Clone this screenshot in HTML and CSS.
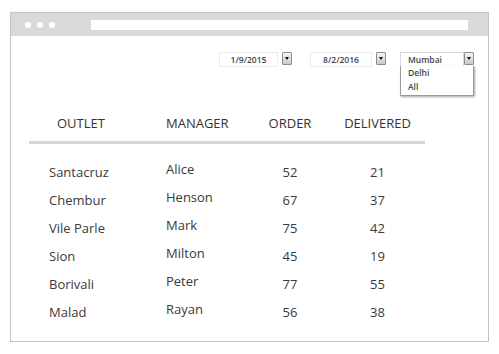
FILE: index.html
```html
<!DOCTYPE html>
<html lang="en">
<head>
    <meta charset="utf-8">
    <link rel="stylesheet" href="styles.css">
</head>
<body>
    <div class="frame">
        <div class="titlebar">
            <span class="dot"></span>
            <span class="dot"></span>
            <span class="dot"></span>
            <span class="address"></span>
        </div>

        <div class="filters">
            <div class="picker first">
                <div class="field">1/9/2015</div>
                <div class="btn"><span class="arrow"></span></div>
            </div>
            <div class="picker second">
                <div class="field">8/2/2016</div>
                <div class="btn"><span class="arrow"></span></div>
            </div>
            <div class="picker city">
                <div class="field left">Mumbai</div>
                <div class="btn"><span class="arrow"></span></div>
                <ul class="options">
                    <li>Delhi</li>
                    <li>All</li>
                </ul>
            </div>
        </div>

        <div class="report">
            <div class="row head">
                <div class="outlet">OUTLET</div>
                <div class="manager">MANAGER</div>
                <div class="num">ORDER</div>
                <div class="num">DELIVERED</div>
            </div>
            <div class="rule"></div>
            <div class="rows">
                <div class="row">
                    <div class="outlet">Santacruz</div>
                    <div class="manager">Alice</div>
                    <div class="num">52</div>
                    <div class="num">21</div>
                </div>
                <div class="row">
                    <div class="outlet">Chembur</div>
                    <div class="manager">Henson</div>
                    <div class="num">67</div>
                    <div class="num">37</div>
                </div>
                <div class="row">
                    <div class="outlet">Vile Parle</div>
                    <div class="manager">Mark</div>
                    <div class="num">75</div>
                    <div class="num">42</div>
                </div>
                <div class="row">
                    <div class="outlet">Sion</div>
                    <div class="manager">Milton</div>
                    <div class="num">45</div>
                    <div class="num">19</div>
                </div>
                <div class="row">
                    <div class="outlet">Borivali</div>
                    <div class="manager">Peter</div>
                    <div class="num">77</div>
                    <div class="num">55</div>
                </div>
                <div class="row">
                    <div class="outlet">Malad</div>
                    <div class="manager">Rayan</div>
                    <div class="num">56</div>
                    <div class="num">38</div>
                </div>
            </div>
        </div>
    </div>
</body>
</html>
```

FILE: styles.css
```css
/* Page and browser frame */
body {
    margin: 0;
    background: #fff;
    font-family: "Open Sans", "DejaVu Sans", sans-serif;
    color: #333;
}

.frame {
    margin: 12px 0 0 10px;
    width: 479px;
    height: 330px;
    box-sizing: border-box;
    border: 1px solid #c4c4c4;
}

.titlebar {
    height: 23px;
    background: #d9d9d9;
    display: flex;
    align-items: center;
    padding-left: 14px;
}

.dot {
    width: 6px;
    height: 6px;
    border-radius: 50%;
    background: #fff;
    margin-right: 6px;
}

.address {
    flex: 1;
    height: 10px;
    background: #fff;
    margin-left: 30px;
    margin-right: 20px;
}

/* Date pickers and city select */
.filters {
    display: flex;
    margin-top: 16px;
    padding-left: 208px;
}

.picker {
    display: flex;
    align-items: flex-start;
    position: relative;
}

.second {
    margin-left: 18px;
}

.city {
    margin-left: 14px;
}

.field {
    height: 15px;
    box-sizing: border-box;
    border: 1px solid #ebebeb;
    font-size: 8.5px;
    font-weight: 600;
    line-height: 13px;
    color: #3d4452;
    text-align: center;
    width: 59px;
}

.second .field {
    width: 62px;
}

.city .field {
    width: 64px;
    text-align: left;
    padding-left: 7px;
    border-color: #d8d8d8;
    border-bottom: none;
}

.btn {
    width: 10px;
    height: 13px;
    box-sizing: border-box;
    margin-left: 4px;
    border: 1px solid #8c8c8c;
    border-radius: 1px;
    background: linear-gradient(#f6f6f6, #c9c9c9);
    display: flex;
    align-items: center;
    justify-content: center;
}

.city .btn {
    margin-left: 0;
}

.arrow {
    width: 0;
    height: 0;
    border-left: 2px solid transparent;
    border-right: 2px solid transparent;
    border-top: 3px solid #111;
}

.options {
    position: absolute;
    top: 14px;
    left: 0;
    width: 74px;
    box-sizing: border-box;
    margin: 0;
    padding: 0 0 1px 7px;
    list-style: none;
    background: #fff;
    border: 1px solid #9a9a9a;
    border-top: none;
    box-shadow: 1px 1px 2px rgba(0, 0, 0, 0.35);
    font-size: 8.5px;
    font-weight: 600;
    color: #3d4452;
}

.options li {
    line-height: 14px;
}

/* Report table */
.report {
    margin: 42px 0 0 18px;
    width: 396px;
}

.row {
    display: grid;
    grid-template-columns: 137px 84px 80px 95px;
    height: 28px;
    align-items: start;
    font-size: 13px;
    line-height: 28px;
    color: #3a3a3a;
}

.head {
    color: #333;
}

.outlet {
    padding-left: 20px;
}

.head .outlet {
    padding-left: 28px;
}

.rows .manager {
    line-height: 23px;
}

.num {
    text-align: center;
}

.rule {
    height: 3px;
    background: #d6d6d6;
    margin-top: 4px;
}

.rows {
    margin-top: 14px;
}
```
